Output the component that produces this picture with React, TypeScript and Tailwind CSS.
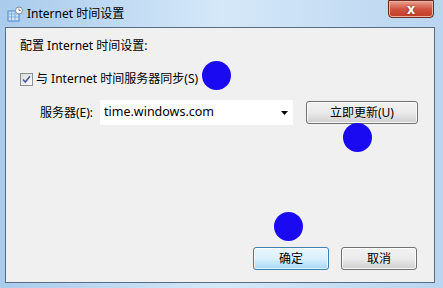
import React from 'react';

const font = { fontFamily: '"Noto Sans", "Noto Sans CJK SC", sans-serif' };

const TitleIcon = () => (
  <svg width="16" height="16" viewBox="0 0 16 16">
    <rect x="1" y="5" width="11" height="10" fill="#cfe3f5" stroke="#4a86c5" />
    <path d="M1 8h11M1 11h11M4.5 5v10M8 5v10" stroke="#6fa3d8" strokeWidth="0.8" />
    <circle cx="12" cy="4.5" r="3.5" fill="#fff" stroke="#7a8a99" />
    <path d="M12 2.5v2h1.6" stroke="#555" strokeWidth="0.8" fill="none" />
  </svg>
);

const Dot = ({ className }: { className: string }) => (
  <div className={`absolute w-[29px] h-[29px] rounded-full bg-[#1a0af2] ${className}`} />
);

const Button = ({ label, primary = false, className = '' }: { label: string; primary?: boolean; className?: string }) => (
  <div
    className={`flex items-center justify-center rounded-[3px] border text-[12px] text-black ${
      primary
        ? 'border-[#3c7fb1] bg-gradient-to-b from-[#eaf6fd] via-[#d9f0fc] to-[#a7d9f5] shadow-[inset_0_0_0_1px_#ffffffaa]'
        : 'border-[#707070] bg-gradient-to-b from-[#f2f2f2] via-[#ebebeb] to-[#cfcfcf] shadow-[inset_0_0_0_1px_#ffffffcc]'
    } ${className}`}
  >
    {label}
  </div>
);

export default function App() {
  return (
    <div
      className="relative w-[443px] h-[288px] overflow-hidden bg-gradient-to-r from-[#a9cbec] via-[#d5e8f8] to-[#b9d5f0]"
      style={font}
    >
      {/* title bar */}
      <div className="flex h-[27px] items-center pl-[7px]">
        <TitleIcon />
        <span className="ml-[4px] text-[12px] text-black">Internet 时间设置</span>
        <div className="ml-auto mr-[9px] -mt-[10px] flex h-[18px] w-[46px] items-center justify-center rounded-b-[4px] border border-[#6b2a22] bg-gradient-to-b from-[#e8a293] via-[#d0533f] to-[#c13c26] shadow-[inset_0_0_0_1px_#f0b0a0]">
          <span className="text-[14px] font-bold leading-none text-white [text-shadow:0_0_2px_#5a1a10]">x</span>
        </div>
      </div>

      {/* client area */}
      <div className="ml-[5px] h-[256px] w-[430px] border border-[#596d82] bg-[#f0f0f0] text-[12px] text-black">
        <div className="ml-[14px] mt-[10px] leading-[16px]">配置 Internet 时间设置:</div>

        <div className="ml-[14px] mt-[17px] flex items-center leading-[16px]">
          <div className="flex h-[13px] w-[13px] items-center justify-center border border-[#8e8f8f] bg-gradient-to-br from-[#dcdcdc] to-[#fafafa]">
            <svg width="9" height="9" viewBox="0 0 9 9">
              <path d="M1 4.5l2.3 2.5L8 1.2" stroke="#4a5f97" strokeWidth="1.6" fill="none" />
            </svg>
          </div>
          <span className="ml-[3px]">与 Internet 时间服务器同步(S)</span>
        </div>

        <div className="mt-[13px] flex items-center">
          <span className="ml-[34px] w-[60px]">服务器(E):</span>
          <div className="flex h-[25px] w-[193px] items-center bg-white pl-[4px] pr-[5px] text-[12.5px]">
            <span>time.windows.com</span>
            <svg className="ml-auto" width="7" height="4" viewBox="0 0 7 4">
              <path d="M0 0h7L3.5 4z" fill="#000" />
            </svg>
          </div>
          <Button label="立即更新(U)" className="ml-[13px] h-[23px] w-[112px]" />
        </div>

        <div className="mt-[122px] flex">
          <Button label="确定" primary className="ml-[247px] h-[23px] w-[76px]" />
          <Button label="取消" className="ml-[12px] h-[23px] w-[76px]" />
        </div>
      </div>

      <Dot className="left-[202px] top-[61px]" />
      <Dot className="left-[343px] top-[123px]" />
      <Dot className="left-[274px] top-[212px]" />
    </div>
  );
}
